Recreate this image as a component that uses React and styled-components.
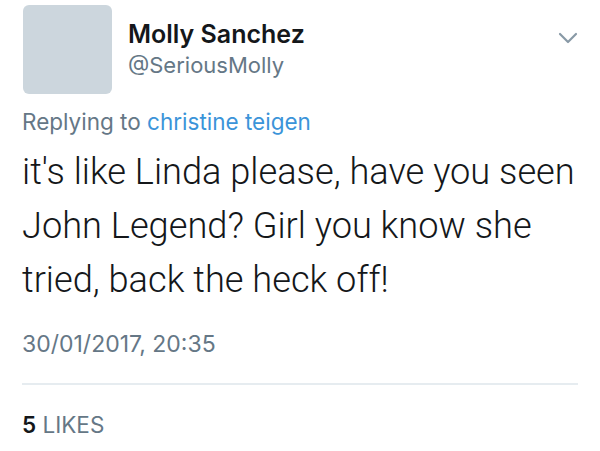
import React from 'react';
import styled, { createGlobalStyle } from 'styled-components';

const GlobalStyle = createGlobalStyle`
  body {
    margin: 0;
    background: #ffffff;
    font-family: Inter, "Liberation Sans", Arial, sans-serif;
  }
`;

const Tweet = styled.div`
  width: 600px;
  height: 451px;
  box-sizing: border-box;
  padding: 5px 22px 0 22px;
  background: #ffffff;
  overflow: hidden;
`;

const Header = styled.div`
  display: flex;
  align-items: flex-start;
`;

const Avatar = styled.div`
  width: 89px;
  height: 89px;
  margin-left: 1px;
  border-radius: 6px;
  background: #ccd6dd;
  flex-shrink: 0;
`;

const Names = styled.div`
  display: flex;
  flex-direction: column;
  margin-left: 16px;
  padding-top: 15px;
  flex: 1;
`;

const Name = styled.div`
  font-size: 25px;
  line-height: 28px;
  font-weight: 600;
  color: #14171a;
`;

const Handle = styled.div`
  margin-top: 3px;
  font-size: 22px;
  line-height: 28px;
  color: #657786;
`;

const Caret = styled.svg`
  width: 20px;
  height: 12px;
  margin-top: 27px;
  flex-shrink: 0;
`;

const Replying = styled.div`
  margin-top: 14px;
  font-size: 22.5px;
  line-height: 28px;
  color: #657786;
  a {
    color: #3b94d9;
    text-decoration: none;
  }
`;

const Text = styled.p`
  margin: 9px 0 0;
  font-family: Roboto, "Liberation Sans", sans-serif;
  font-weight: 300;
  font-size: 36.2px;
  line-height: 54px;
  color: #14171a;
`;

const Time = styled.div`
  margin-top: 23px;
  font-size: 23px;
  line-height: 28px;
  color: #657786;
`;

const Divider = styled.hr`
  margin: 25px 0 0;
  border: none;
  border-top: 2px solid #e6ecf0;
`;

const Stats = styled.div`
  margin-top: 26px;
  font-size: 22.5px;
  line-height: 28px;
  color: #657786;
  b {
    color: #14171a;
    font-weight: 600;
  }
`;

export default function App() {
  return (
    <>
      <GlobalStyle />
      <Tweet>
        <Header>
          <Avatar />
          <Names>
            <Name>Molly Sanchez</Name>
            <Handle>@SeriousMolly</Handle>
          </Names>
          <Caret viewBox="0 0 20 12">
            <path d="M2 2 L10 10 L18 2" fill="none" stroke="#8899a6" strokeWidth="2.2" strokeLinecap="round" strokeLinejoin="round" />
          </Caret>
        </Header>
        <Replying>
          Replying to <a href="#">christine teigen</a>
        </Replying>
        <Text>it's like Linda please, have you seen John Legend? Girl you know she tried, back the heck off!</Text>
        <Time>30/01/2017, 20:35</Time>
        <Divider />
        <Stats>
          <b>5</b> LIKES
        </Stats>
      </Tweet>
    </>
  );
}
